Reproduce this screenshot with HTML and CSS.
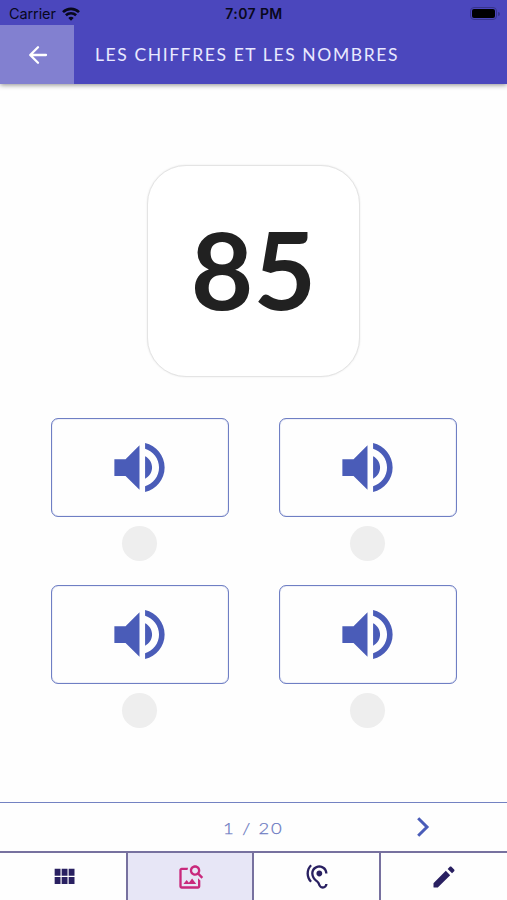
FILE: index.html
```html
<!DOCTYPE html>
<html lang="fr">
<head>
<meta charset="utf-8">
<title>Les chiffres et les nombres</title>
<link rel="stylesheet" href="styles.css">
</head>
<body>
<svg class="defs" width="0" height="0" aria-hidden="true">
  <symbol id="volume" viewBox="0 0 24 24"><path d="M3 9v6h4l5 5V4L7 9H3zM16.5 12c0-1.77-1.02-3.29-2.5-4.03v8.05c1.48-.73 2.5-2.25 2.5-4.02zM14 3.23v2.06c2.89.86 5 3.54 5 6.71s-2.11 5.85-5 6.71v2.06c4.01-.91 7-4.49 7-8.77s-2.99-7.86-7-8.77z"/></symbol>
</svg>
<div class="app">
  <div class="status">
    <div class="carrier"><span>Carrier</span>
      <svg class="wifi" viewBox="0 0 18 14"><g fill="none" stroke="#08081c" stroke-width="2.6"><path d="M1 5.2C5.5.7 12.500.7 17 5.200"/><path d="M3.900 8.300c2.900-2.800 7.300-2.800 10.200 0"/></g><path fill="#08081c" d="M9 13.800l-2.700-2.900c1.500-1.400 3.900-1.400 5.400 0z"/></svg>
    </div>
    <div class="time">7:07 PM</div>
    <div class="power"><div class="battery"></div><div class="nub"></div></div>
  </div>
  <header class="bar">
    <div class="back"><svg viewBox="0 0 24 24"><path d="M20 12H4.500M12 4.200L4.200 12l7.800 7.800"/></svg></div>
    <h1 class="title">LES CHIFFRES ET LES NOMBRES</h1>
  </header>
  <main class="quiz">
    <div class="number">85</div>
    <div class="answers">
      <div class="answer"><div class="play"><svg><use href="#volume"/></svg></div><div class="choice"></div></div>
      <div class="answer"><div class="play"><svg><use href="#volume"/></svg></div><div class="choice"></div></div>
      <div class="answer"><div class="play"><svg><use href="#volume"/></svg></div><div class="choice"></div></div>
      <div class="answer"><div class="play"><svg><use href="#volume"/></svg></div><div class="choice"></div></div>
    </div>
  </main>
  <div class="pager">
    <div></div>
    <div class="count">1 / 20</div>
    <div class="next"><svg viewBox="0 0 14 22"><path d="M2.200 2.200L11 11l-8.800 8.800"/></svg></div>
  </div>
  <nav class="tabs">
    <div class="tab"><svg viewBox="0 0 24 24"><path d="M4 11h5V5H4v6zm0 7h5v-6H4v6zm6 0h5v-6h-5v6zm6 0h5v-6h-5v6zm-6-7h5V5h-5v6zm6-6v6h5V5h-5z"/></svg></div>
    <div class="tab active"><svg viewBox="0 0 24 24"><path d="M18 13v7H4V6h5.020c.05-.71.22-1.380.48-2H4c-1.100 0-2 .9-2 2v14c0 1.100.9 2 2 2h14c1.100 0 2-.9 2-2v-5l-2-2zm-1.500 5h-11l2.750-3.530 1.960 2.360 2.750-3.540L16.500 18zm2.800-9.110c.44-.7.7-1.510.7-2.390C20 4.010 17.990 2 15.500 2S11 4.010 11 6.500s2.010 4.500 4.490 4.500c.88 0 1.700-.26 2.390-.7L21 13.420 22.420 12 19.300 8.890zM15.500 9C14.120 9 13 7.880 13 6.500S14.120 4 15.500 4 18 5.120 18 6.500 16.880 9 15.500 9z"/></svg></div>
    <div class="tab hearing"><svg viewBox="0 0 24 24"><path d="M17 20c-.29 0-.56-.06-.76-.15-.71-.37-1.210-.88-1.710-2.380-.51-1.560-1.470-2.290-2.390-3-.79-.61-1.610-1.240-2.320-2.530C9.290 10.980 9 9.930 9 9c0-2.800 2.200-5 5-5s5 2.200 5 5h2c0-3.930-3.070-7-7-7S7 5.070 7 9c0 1.260.38 2.650 1.070 3.900.91 1.650 1.980 2.480 2.850 3.150.81.62 1.390 1.070 1.710 2.050.6 1.820 1.370 2.840 2.730 3.550.51.23 1.070.35 1.640.35 2.210 0 4-1.790 4-4h-2c0 1.100-.9 2-2 2zM7.640 2.640L6.220 1.220C4.230 3.210 3 5.960 3 9s1.230 5.790 3.220 7.780l1.410-1.410C6.010 13.740 5 11.490 5 9s1.010-4.740 2.640-6.360zM11.500 9c0 1.380 1.120 2.500 2.500 2.500s2.500-1.120 2.500-2.500-1.120-2.500-2.500-2.500-2.500 1.120-2.500 2.500z"/></svg></div>
    <div class="tab edit"><svg viewBox="0 0 24 24"><path d="M3 17.460v3.040c0 .28.22.5.5.5h3.040c.13 0 .26-.05.35-.15L17.300 10.450l-3.750-3.750L3.150 17.100c-.1.1-.15.22-.15.36zM20.710 7.040c.39-.39.39-1.020 0-1.410l-2.340-2.340c-.39-.39-1.020-.39-1.410 0l-1.830 1.830 3.750 3.750 1.830-1.830z"/></svg></div>
  </nav>
</div>
</body>
</html>
```
FILE: styles.css
```css
* { box-sizing: border-box; }
body { margin: 0; background: #fefefe; font-family: Lato, sans-serif; }
svg { display: block; }
.defs { position: absolute; }
.app { width: 507px; height: 900px; display: flex; flex-direction: column; overflow: hidden; }

.status {
  position: relative; z-index: 1;
  height: 25px; padding: 2px 7px 0 9px; background: #4b47bd; color: #08081c;
  display: grid; grid-template-columns: 1fr auto 1fr; align-items: center;
  font: 14.5px/22px Inter, sans-serif;
}
.carrier { display: flex; align-items: center; gap: 6px; letter-spacing: -0.1px; }
.wifi { width: 18px; height: 14px; }
.time { font-weight: 600; font-size: 14px; letter-spacing: 0.4px; margin-right: 1px; }
.power { display: flex; align-items: center; justify-content: flex-end; gap: 1px; }
.battery { width: 27px; height: 13px; border: 1px solid #37348c; border-radius: 4px; padding: 1px; background: #000 content-box; }
.nub { width: 2px; height: 4px; border-radius: 0 2px 2px 0; background: #37348c; }

.bar { height: 59px; flex: none; display: flex; align-items: center; background: #4b47bd; box-shadow: 0 1px 5px rgba(0, 0, 0, .45); }
.back { width: 74px; height: 59px; display: flex; align-items: center; justify-content: center; background: #8280d0; }
.back svg { width: 24px; height: 24px; margin-left: 2px; fill: none; stroke: #fff; stroke-width: 2.3; stroke-linecap: round; stroke-linejoin: round; }
.title { margin: 0 0 0 21px; font-size: 17.5px; font-weight: 400; line-height: 22px; letter-spacing: 1.6px; color: #e9e9ff; white-space: nowrap; }

.quiz { flex: 1; display: flex; flex-direction: column; align-items: center; padding-top: 81px; }
.number {
  width: 213px; height: 212px; border: 1px solid #e4e4e4; border-radius: 39px; background: #fff;
  box-shadow: 0 0 2px rgba(0, 0, 0, .1);
  font-size: 108px; font-weight: 700; line-height: 205px; text-align: center; color: #212121;
}
.answers { margin-top: 41px; display: grid; grid-template-columns: 178px 178px; column-gap: 50px; row-gap: 24px; }
.answer { display: flex; flex-direction: column; align-items: center; gap: 9px; }
.play { width: 178px; height: 99px; border: 1px solid #6f7fc4; border-radius: 7px; box-shadow: inset 0 0 1px #6f7fc4; display: flex; align-items: center; justify-content: center; }
.play svg { width: 67px; height: 67px; fill: #4a5cb8; }
.choice { width: 35px; height: 35px; border-radius: 50%; background: #eee; }

.pager { height: 49px; flex: none; border-top: 1px solid #7382c2; display: grid; grid-template-columns: 1fr auto 1fr; align-items: center; }
.count { padding-top: 2px; font-size: 16px; font-weight: 300; -webkit-text-stroke: 0.25px #7482c6; letter-spacing: 1.5px; line-height: 20px; color: #6474bd; transform: scaleX(1.15); }
.next { padding-left: 136px; }
.next svg { width: 14px; height: 22px; fill: none; stroke: #4a5cb8; stroke-width: 3; }

.tabs { height: 49px; flex: none; display: grid; grid-template-columns: 128px 126px 127px 1fr; border-top: 2px solid #77719f; }
.tab { display: flex; align-items: center; justify-content: center; border-right: 2px solid #77719f; }
.tab:last-child { border-right: 0; }
.tab svg { width: 28px; height: 28px; margin: 0 0 0 2px; fill: #292061; }
.tab.active { background: #e7e6f6; }
.tab.active svg { margin-left: 1px; fill: #c9297c; }
.tab.hearing svg { margin-left: 1px; }
.tab.edit svg { margin-left: -1px; }
```
